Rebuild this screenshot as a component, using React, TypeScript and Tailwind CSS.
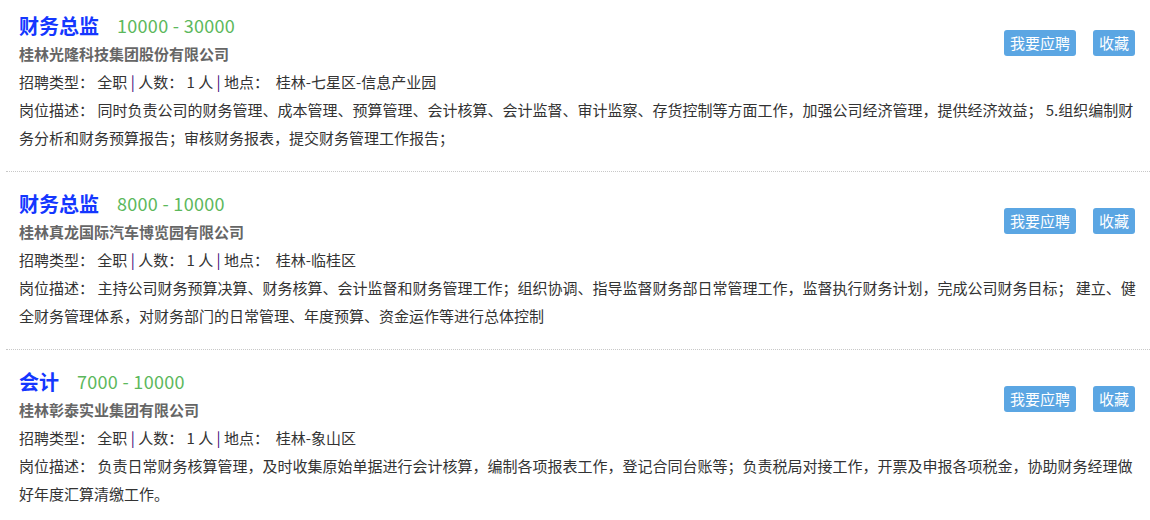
import React from 'react';

type Job = {
  title: string;
  salary: string;
  company: string;
  place: string;
  desc: string;
};

const jobs: Job[] = [
  {
    title: '财务总监',
    salary: '10000 - 30000',
    company: '桂林光隆科技集团股份有限公司',
    place: '桂林-七星区-信息产业园',
    desc: '同时负责公司的财务管理、成本管理、预算管理、会计核算、会计监督、审计监察、存货控制等方面工作，加强公司经济管理，提供经济效益； 5.组织编制财务分析和财务预算报告；审核财务报表，提交财务管理工作报告；',
  },
  {
    title: '财务总监',
    salary: '8000 - 10000',
    company: '桂林真龙国际汽车博览园有限公司',
    place: '桂林-临桂区',
    desc: '主持公司财务预算决算、财务核算、会计监督和财务管理工作；组织协调、指导监督财务部日常管理工作，监督执行财务计划，完成公司财务目标； 建立、健全财务管理体系，对财务部门的日常管理、年度预算、资金运作等进行总体控制',
  },
  {
    title: '会计',
    salary: '7000 - 10000',
    company: '桂林彰泰实业集团有限公司',
    place: '桂林-象山区',
    desc: '负责日常财务核算管理，及时收集原始单据进行会计核算，编制各项报表工作，登记合同台账等；负责税局对接工作，开票及申报各项税金，协助财务经理做好年度汇算清缴工作。',
  },
];

const JobItem: React.FC<{ job: Job; first: boolean }> = ({ job, first }) => (
  <div
    className={
      first
        ? 'pl-[13px] pr-[6px] pt-[11px] pb-[19px]'
        : 'pl-[13px] pr-[6px] pt-[17px] pb-[19px] border-t border-dotted border-[#c8c8c8]'
    }
  >
    {/* Actions */}
    <div className="float-right mt-[19px] mr-[9px] flex gap-[17px]">
      <button className="h-[26px] px-[6px] bg-[#5ba6e3] text-white text-[15px] leading-[26px] rounded-[3px]">
        我要应聘
      </button>
      <button className="h-[26px] px-[6px] bg-[#5ba6e3] text-white text-[15px] leading-[26px] rounded-[3px]">
        收藏
      </button>
    </div>

    <div className="h-[29px] flex items-center gap-[18px]">
      <span className="text-[20px] font-bold text-[#1437ff]">{job.title}</span>
      <span className="text-[18px] tracking-[0.3px] text-[#5cb85c]">{job.salary}</span>
    </div>
    <div className="leading-[28px] text-[15px] font-bold text-[#666]">{job.company}</div>
    <div className="leading-[28px] text-[15px] text-[#333]">
      招聘类型：&nbsp;全职 <span className="text-[#3c0a78]">|</span> 人数：&nbsp;1 人{' '}
      <span className="text-[#3c0a78]">|</span> 地点：&nbsp;&nbsp;{job.place}
    </div>
    <p className="leading-[28px] text-[15px] text-[#333]">
      岗位描述：&nbsp;{job.desc}
    </p>
  </div>
);

const App: React.FC = () => {
  return (
    <div
      className="w-[1150px] h-[520px] overflow-hidden bg-white pl-[6px]"
      style={{ fontFamily: '"Noto Sans CJK SC", "Noto Sans", sans-serif' }}
    >
      {jobs.map((job, i) => (
        <JobItem key={i} job={job} first={i === 0} />
      ))}
    </div>
  );
};

export default App;
